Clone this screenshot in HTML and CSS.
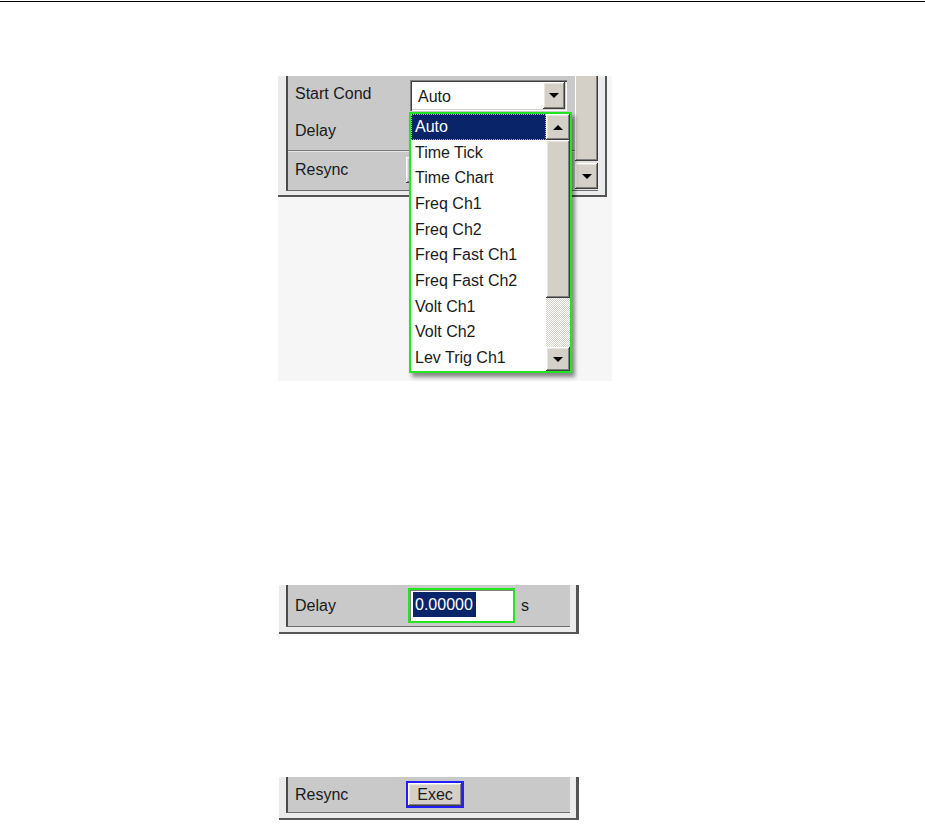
FILE: index.html
```html
<!DOCTYPE html>
<html>
<head>
<meta charset="utf-8">
<title>Trigger settings</title>
<link rel="stylesheet" href="styles.css">
</head>
<body>
<div class="top-rule"></div>

<div class="shot shot-1">
  <div class="frame frame-1">
    <div class="frame-inner">
      <div class="content content-1">
        <div class="row row-a">
          <span class="label label-1">Start Cond</span>
          <div class="combo">
            <span class="combo-value">Auto</span>
            <span class="btn combo-btn"><i class="tri tri-down"></i></span>
          </div>
        </div>
        <div class="row row-b">
          <span class="label label-1">Delay</span>
        </div>
        <div class="sep"></div>
        <div class="row row-c">
          <span class="label label-1b">Resync</span>
          <span class="btn hidden-btn"></span>
        </div>
      </div>
      <div class="side-scroll">
        <div class="btn side-thumb"></div>
        <div class="btn side-down"><i class="tri tri-down"></i></div>
      </div>
    </div>
  </div>

  <div class="dropdown">
    <ul class="list">
      <li class="item selected">Auto</li>
      <li class="item">Time Tick</li>
      <li class="item">Time Chart</li>
      <li class="item">Freq Ch1</li>
      <li class="item">Freq Ch2</li>
      <li class="item">Freq Fast Ch1</li>
      <li class="item">Freq Fast Ch2</li>
      <li class="item">Volt Ch1</li>
      <li class="item">Volt Ch2</li>
      <li class="item">Lev Trig Ch1</li>
    </ul>
    <div class="vscroll">
      <div class="btn sb-btn sb-up"><i class="tri tri-up"></i></div>
      <div class="btn sb-thumb"></div>
      <div class="sb-track"></div>
      <div class="btn sb-btn sb-down"><i class="tri tri-down"></i></div>
    </div>
  </div>
</div>

<div class="shot shot-2">
  <div class="frame frame-2">
    <div class="frame-inner">
      <div class="content content-2">
        <div class="row row-d">
          <span class="label label-2">Delay</span>
          <div class="entry"><span class="entry-sel">0.00000</span></div>
          <span class="unit">s</span>
        </div>
      </div>
    </div>
  </div>
</div>

<div class="shot shot-3">
  <div class="frame frame-2">
    <div class="frame-inner">
      <div class="content content-3">
        <div class="row row-e">
          <span class="label label-3">Resync</span>
          <div class="exec-focus"><span class="btn exec-btn">Exec</span></div>
        </div>
      </div>
    </div>
  </div>
</div>
</body>
</html>
```
FILE: styles.css
```css
* { box-sizing: border-box; }

body {
  margin: 0;
  background: #fff;
  font-family: "Liberation Sans", Arial, sans-serif;
  font-size: 16px;
  color: #1a1a1a;
}

.top-rule {
  margin-top: 1px;
  height: 1px;
  background: #000;
}

.shot { position: relative; }

.shot-1 {
  margin: 74px 0 0 278px;
  width: 334px;
  height: 305px;
  background: #f6f6f6;
}

.shot-2 { margin: 204px 0 0 279px; }
.shot-3 { margin: 143px 0 0 279px; }

/* panel frame */
.frame {
  display: flex;
  background: #ebebeb;
  border-bottom: 2px solid #555;
}

.frame-1 {
  width: 329px;
  padding: 0 7px 4px 8px;
  border-right: 2px solid #555;
}

.frame-2 {
  width: 300px;
  padding: 0 6px 5px 7px;
  border-right: 3px solid #555;
}

.frame-inner {
  display: flex;
  flex: 1;
  border-left: 2px solid #4a4a4a;
  border-bottom: 1px solid #6e6e6e;
  background: #c9c9c9;
}

.content { display: flex; flex-direction: column; }
.content-1 { width: 287px; height: 114px; }
.content-2 { flex: 1; height: 41px; justify-content: center; }
.content-3 { flex: 1; height: 35px; justify-content: center; }

.row { display: flex; align-items: center; }
.row-a { height: 36px; align-items: flex-start; }
.row-b { height: 38px; }
.row-c { height: 36px; }

.label { padding-left: 7px; flex: none; }
.row-a .label { margin-top: 9px; }
.label-1 { width: 122px; }
.label-1b { width: 118px; }
.label-2 { width: 120px; }
.label-3 { width: 119px; }

.sep {
  height: 2px;
  border-top: 1px solid #777;
  background: #e6e6e6;
}

/* windows classic raised button */
.btn {
  background: #d4d0c8;
  box-shadow: inset -1px -1px #404040, inset 1px 1px #fff,
              inset -2px -2px #808080, inset 2px 2px #e8e6e0;
}

.tri {
  display: block;
  width: 0;
  height: 0;
  border-left: 5px solid transparent;
  border-right: 5px solid transparent;
}
.tri-down { border-top: 5px solid #000; }
.tri-up { border-bottom: 5px solid #000; }

/* combo box */
.combo {
  margin-top: 4px;
  width: 157px;
  height: 31px;
  display: flex;
  align-items: center;
  background: #fff;
  padding: 2px;
  box-shadow: inset 1px 1px #808080, inset 2px 2px #404040,
              inset -1px -1px #fff, inset -2px -2px #d4d0c8;
}
.combo-value { flex: 1; padding-left: 6px; padding-top: 2px; }
.combo-btn {
  width: 22px;
  height: 27px;
  display: flex;
  align-items: center;
  justify-content: center;
}

.hidden-btn { width: 60px; height: 26px; }

/* side scroll column of the panel */
.side-scroll {
  width: 23px;
  display: flex;
  flex-direction: column;
  gap: 2px;
  background: #e4e2dc;
}
.side-thumb {
  height: 85px;
  box-shadow: inset -1px -1px #404040, inset 1px 0 #fff, inset -2px -2px #808080;
}
.side-down {
  height: 26px;
  display: flex;
  align-items: center;
  justify-content: center;
}

/* dropdown list */
.dropdown {
  position: absolute;
  left: 131px;
  top: 36px;
  width: 163px;
  height: 261px;
  display: flex;
  background: #fff;
  border: 2px solid #22e622;
  box-shadow: 3px 4px 4px rgba(0, 0, 0, 0.45);
}

.list {
  list-style: none;
  margin: 0;
  padding: 0;
  flex: 1;
}

.item {
  height: 25.7px;
  display: flex;
  align-items: center;
  padding-left: 4px;
  white-space: nowrap;
}

.item.selected {
  background: #0a246a;
  color: #fff;
  outline: 1px dotted #c8bb5a;
  outline-offset: -1px;
}

.vscroll {
  width: 24px;
  display: flex;
  flex-direction: column;
}
.sb-btn {
  display: flex;
  align-items: center;
  justify-content: center;
}
.sb-up { height: 26px; }
.sb-thumb { height: 158px; }
.sb-track {
  height: 49px;
  background: repeating-conic-gradient(#d4d0c8 0 25%, #fff 0 50%) 0 0 / 2px 2px;
}
.sb-down { height: 24px; }

/* entry field */
.entry {
  width: 107px;
  height: 35px;
  border: 2px solid #22e622;
  background: #fff;
  padding: 2px 0 0 3px;
  box-shadow: inset 1px 1px #808080;
}
.entry-sel {
  display: inline-flex;
  align-items: center;
  height: 25px;
  padding: 0 3px 0 2px;
  background: #0a246a;
  color: #fff;
}
.unit { padding-left: 6px; }

/* exec button */
.exec-focus {
  width: 58px;
  height: 27px;
  margin-left: -1px;
  border: 2px solid #1f1fff;
}
.exec-btn {
  display: flex;
  align-items: center;
  justify-content: center;
  width: 100%;
  height: 100%;
}
```
